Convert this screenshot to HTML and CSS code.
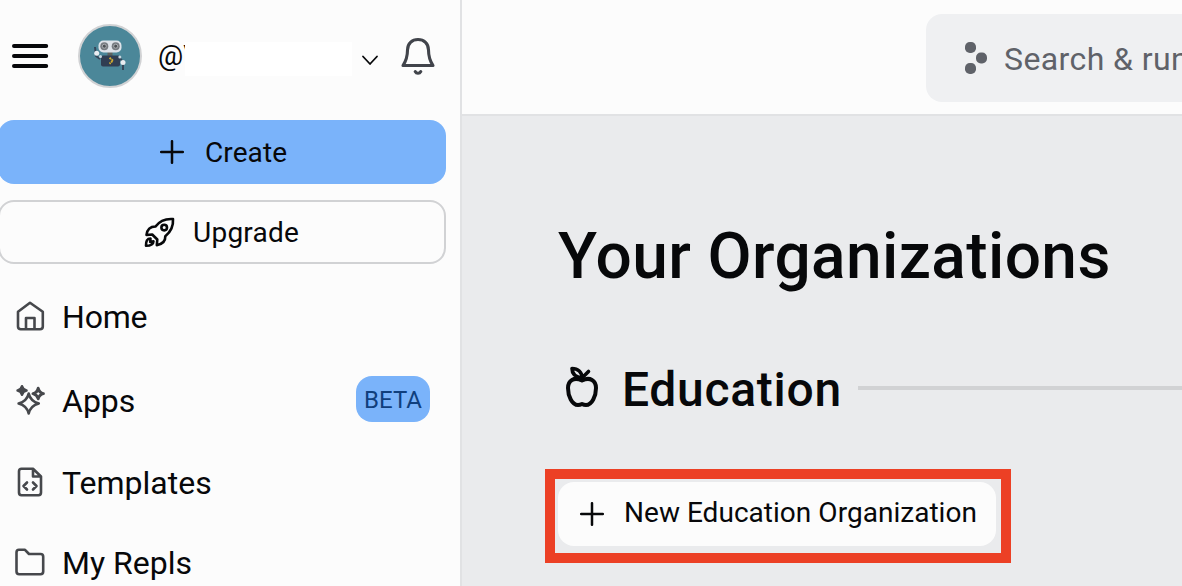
FILE: index.html
```html
<!DOCTYPE html>
<html lang="en">
<head>
<meta charset="utf-8">
<title>Your Organizations</title>
<link rel="stylesheet" href="styles.css">
</head>
<body>
<div class="app">
  <aside class="sidebar">
    <div class="account">
      <svg class="menu" width="38" height="26" viewBox="0 0 38 26" fill="none" stroke="#07080a" stroke-width="4" stroke-linecap="round"><path d="M3 3H35.200M3 13H35.200M3 23H35.200"/></svg>
      <svg class="avatar" width="64" height="64" viewBox="0 0 64 64">
        <circle cx="32" cy="32" r="31" fill="#4b8799" stroke="#d1d2d4" stroke-width="2"/>
        <path d="M22 35L18 32L17 23" fill="none" stroke="#36475a" stroke-width="2"/>
        <path d="M41 33L45 38V46" fill="none" stroke="#36475a" stroke-width="2"/>
        <rect x="29.5" y="28" width="5" height="5" fill="#5d625f"/>
        <rect x="23" y="31.5" width="19" height="11" rx="2" fill="#303e52"/>
        <rect x="20.5" y="16.500" width="23" height="12" rx="5" fill="#dee3e9"/>
        <circle cx="26.300" cy="22.200" r="4" fill="#777b80"/><circle cx="37.700" cy="22.200" r="4" fill="#777b80"/>
        <circle cx="26.300" cy="22.200" r="2" fill="#4c5054" stroke="#b9bdc0" stroke-width=".8"/><circle cx="37.700" cy="22.200" r="2" fill="#4c5054" stroke="#b9bdc0" stroke-width=".8"/>
        <circle cx="18.700" cy="29.300" r="2.500" fill="#e8edf1"/><circle cx="22.500" cy="32.500" r="1.500" fill="#c8d6de"/>
        <circle cx="45" cy="38.500" r="2.500" fill="#e8edf1"/><circle cx="41.800" cy="33" r="1.500" fill="#c8d6de"/>
        <path d="M31.500 33.700L35 36.700L31.500 39.700" fill="none" stroke="#d4ae30" stroke-width="1.900" stroke-dasharray="2 .6"/>
      </svg>
      <div class="handle"><span class="handle-text">@V</span><span class="handle-mask"></span></div>
      <svg class="chevron" width="18" height="12" viewBox="0 0 18 12" fill="none" stroke="#07080a" stroke-width="1.800" stroke-linecap="round" stroke-linejoin="round"><path d="M2 2.500L9 10L16 2.500"/></svg>
      <svg class="bell" width="36" height="40" viewBox="0 0 36 40" fill="none" stroke="#41444b" stroke-width="3.100" stroke-linecap="round" stroke-linejoin="round"><path d="M3 29.500C6 25 7.500 20 7.500 14C7.500 7.500 12 3.500 18 3.500S28.500 7.500 28.500 14C28.500 20 30 25 33 29.500ZM15.200 35.500C16.400 37.800 19.600 37.800 20.800 35.500"/></svg>
    </div>
    <div class="actions">
      <div class="button create">
        <svg width="24" height="24" viewBox="0 0 24 24" fill="none" stroke="#07080a" stroke-width="2.500" stroke-linecap="round"><path d="M12 1.200V22.800M1.200 12H22.800"/></svg>
        <span>Create</span>
      </div>
      <div class="button upgrade">
        <svg width="32" height="32" viewBox="0 0 32 32" fill="none" stroke="#07080a" stroke-width="2.600" stroke-linejoin="round" stroke-linecap="round"><path d="M29 3C22 2.500 15.500 5 11.500 10.500C6.500 10.500 3.200 13 2.500 19L8.200 18.500L13.300 23.500L12.800 29.200C18.500 28.200 21.500 25 21.300 20.300C26.500 16 29.500 10 29 3Z"/><circle cx="20.200" cy="11.600" r="2.800"/><path d="M6.500 22.500C3.200 22.500 1.800 25 2 29.800C6 29.800 9.300 29 9.500 25.200L6.200 26Z"/></svg>
        <span>Upgrade</span>
      </div>
    </div>
    <nav class="nav">
      <div class="nav-item home">
        <svg width="32" height="32" viewBox="0 0 32 32"><path d="M4 11.800L16 2.800L28.800 11.800V26.500Q28.800 29.200 26 29.200H6.800Q4 29.200 4 26.500ZM12 29V18H20.500V29"/></svg>
        <span>Home</span>
      </div>
      <div class="nav-item apps">
        <svg width="32" height="32" viewBox="0 0 32 32"><path d="M14.700 9.500Q16.500 17.300 24.800 19.500Q16.500 21.700 14.700 29.500Q12.900 21.700 4.600 19.500Q12.900 17.300 14.700 9.500Z"/><path class="solid" d="M8 2.300Q8.800 5.700 12.500 6.500Q8.800 7.300 8 10.700Q7.200 7.300 3.600 6.500Q7.200 5.700 8 2.300Z"/><path stroke-width="3" d="M24.200 4.300Q25.200 8.600 29.400 9.600Q25.200 10.600 24.200 14.700Q23.200 10.600 19 9.600Q23.200 8.600 24.200 4.300Z"/></svg>
        <span>Apps</span><b class="badge">BETA</b>
      </div>
      <div class="nav-item templates">
        <svg width="32" height="32" viewBox="0 0 32 32"><path d="M19 2.800H7.500Q5 2.800 5 5.300V26.500Q5 29.200 7.500 29.200H24.500Q27 29.200 27 26.500V10.500ZM19 2.800V10.500H27M13 16.500L9.500 20L13 23.500M19 16.500L22.500 20L19 23.500"/></svg>
        <span>Templates</span>
      </div>
      <div class="nav-item repls">
        <svg width="32" height="32" viewBox="0 0 32 32"><path d="M2.500 6.500Q2.500 3.800 5 3.800H11L15 8H26.500Q29.200 8 29.200 10.700V25.500Q29.200 28.200 26.500 28.200H5.200Q2.500 28.200 2.500 25.500Z"/></svg>
        <span>My Repls</span>
      </div>
    </nav>
  </aside>
  <main class="main">
    <header class="topbar">
      <div class="search">
        <svg width="24" height="34" viewBox="0 0 24 34" fill="#5f6269"><rect x="1" y="1" width="11" height="11" rx="4.800"/><rect x="12" y="11.500" width="11" height="11" rx="4.800"/><rect x="1" y="22" width="11" height="11" rx="4.800"/></svg>
        <span>Search &amp; run</span>
      </div>
    </header>
    <section class="content">
      <h1>Your Organizations</h1>
      <div class="group">
        <svg width="36" height="44" viewBox="0 0 36 44" fill="none" stroke="#07080a" stroke-width="4" stroke-linecap="round" stroke-linejoin="round"><path d="M18 14.500C10 10.500 4 14.500 4 22C4 30 8 39 14 39Q16 39 18 38Q20 39 22 39C28 39 32 30 32 22C32 14.500 26 10.500 18 14.500Z"/><path stroke-width="3.600" d="M18 12C18 6 14 2.500 8 2.500C8 7 11 11 18 12ZM18 12L24.500 5.500"/></svg>
        <h2>Education</h2>
        <div class="rule"></div>
      </div>
      <div class="highlight">
        <div class="new-org">
          <svg width="24" height="24" viewBox="0 0 24 24" fill="none" stroke="#07080a" stroke-width="2.500" stroke-linecap="round"><path d="M12 1.200V22.800M1.200 12H22.800"/></svg>
          <span>New Education Organization</span>
        </div>
      </div>
    </section>
  </main>
</div>
</body>
</html>
```
FILE: styles.css
```css
* { box-sizing: border-box; }
body { margin: 0; overflow: hidden; color: #07080a; font-family: Roboto, "Liberation Sans", sans-serif; }
svg { display: block; flex: none; }
span { white-space: nowrap; }
.app { display: flex; width: 1182px; height: 586px; overflow: hidden; }
.sidebar { width: 462px; flex: none; background: #fcfcfc; border-right: 2px solid #e1e2e4; }
.account { display: flex; align-items: center; height: 112px; padding-left: 11px; }
.avatar { margin-left: 29px; }
.handle { display: flex; align-items: center; width: 194px; height: 34px; margin: 6px 0 0 16px; }
.handle-text { width: 27px; overflow: hidden; font-size: 28px; line-height: 38px; margin-top: -6px; }
.handle-mask { width: 167px; height: 34px; background: #fff; }
.chevron { margin: 8px 0 0 9px; }
.bell { margin-left: 21px; }
.actions { display: flex; flex-direction: column; gap: 16px; margin-top: 8px; }
.button { display: flex; align-items: center; width: 448px; height: 64px; margin-left: -2px; border-radius: 16px; font-size: 28px; }
.create { background: #7ab3fa; padding-left: 162px; gap: 21px; }
.create span { letter-spacing: .1px; }
.upgrade { border: 2px solid #d1d2d4; padding-left: 144px; gap: 17px; }
.upgrade span { letter-spacing: .25px; }
.nav { padding-top: 11px; }
.nav-item { display: flex; align-items: center; height: 80px; padding: 0 30px 0 14px; gap: 16px; font-size: 32px; }
.home, .apps { height: 84px; }
.nav-item svg { fill: none; stroke: #46484c; stroke-width: 2.6; stroke-linecap: round; stroke-linejoin: round; margin-top: -2px; }
.nav-item .solid { fill: #46484c; }
.home span { letter-spacing: -.2px; }
.badge { margin: -4px 0 0 auto; width: 74px; height: 46px; border-radius: 16px; background: #7ab3fa; color: #103f7d; font-size: 24px; line-height: 48px; font-weight: 400; text-align: center; }
.main { flex: 1; min-width: 0; background: #eaebed; }
.topbar { display: flex; height: 116px; padding: 14px 0 0 464px; background: #fcfcfc; border-bottom: 2px solid #e1e2e4; overflow: hidden; }
.search { display: flex; align-items: center; flex: none; width: 500px; height: 88px; padding-left: 38px; gap: 16px; border-radius: 16px; background: #eff0f2; color: #5f6269; font-size: 32px; }
.search span { padding-top: 2px; letter-spacing: .4px; }
.content { padding: 101px 0 0 96px; }
h1, h2 { margin: 0; font-weight: 500; white-space: nowrap; }
h1 { font-size: 64px; line-height: 80px; letter-spacing: .4px; }
.group { display: flex; align-items: center; height: 64px; margin-top: 60px; padding-left: 6px; }
.group svg { margin-top: -3px; }
h2 { width: 219px; margin: 2px 0 0 22px; font-size: 48px; line-height: 64px; letter-spacing: .7px; }
.rule { flex: 1; height: 4px; margin: -2px 0 0 17px; background: #d1d2d4; }
.highlight { width: 466px; height: 94px; margin: 48px 0 0 -13px; padding: 3px; border: 10px solid #ec4025; }
.new-org { display: flex; align-items: center; width: 438px; height: 64px; padding-left: 22px; gap: 20px; border-radius: 16px; background: #fcfcfc; font-size: 28px; }
.new-org span { margin-top: -4px; letter-spacing: .03px; }
```
